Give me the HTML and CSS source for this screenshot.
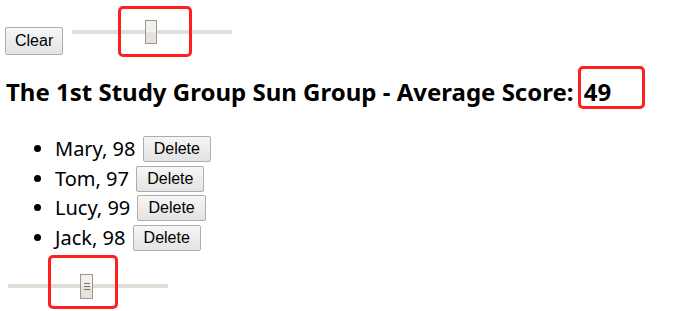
FILE: index.html
```html
<!DOCTYPE html>
<html lang="en">
  <head>
    <meta charset="UTF-8" />
    <title>Study Group</title>
    <link rel="stylesheet" href="styles.css">
  </head>
  <body>
    <!-- Top controls -->
    <div class="toolbar">
      <button class="btn clear-btn">Clear</button>
      <div class="slider">
        <div class="thumb" style="margin-left: 73px"></div>
      </div>
    </div>

    <h2 class="title">The 1st Study Group Sun Group - Average Score: <span class="score">49</span></h2>

    <ul class="members">
      <li>Mary, 98 <button class="btn">Delete</button></li>
      <li>Tom, 97 <button class="btn">Delete</button></li>
      <li>Lucy, 99 <button class="btn">Delete</button></li>
      <li>Jack, 98 <button class="btn">Delete</button></li>
    </ul>

    <div class="slider slider-bottom">
      <div class="thumb grip" style="margin-left: 72px"><i></i><i></i><i></i></div>
    </div>

    <!-- Highlight marks -->
    <div class="mark mark-top"></div>
    <div class="mark mark-score"></div>
    <div class="mark mark-bottom"></div>
  </body>
</html>
```

FILE: styles.css
```css
* {
  box-sizing: border-box;
}
body {
  margin: 0;
  padding: 0 5px;
  background: #fff;
  color: #000;
  font-family: "Noto Sans", sans-serif;
  position: relative;
  height: 311px;
  overflow: hidden;
}

/* Buttons */
.btn {
  font-family: "Liberation Sans", Arial, sans-serif;
  font-size: 16px;
  line-height: 18px;
  padding: 3px 10px;
  border: 1px solid #adadad;
  border-radius: 2px;
  background: linear-gradient(#f6f6f6, #e3e3e3);
  color: #000;
}

/* Top bar */
.toolbar {
  display: flex;
  align-items: flex-start;
  padding-top: 20px;
}
.clear-btn {
  margin-top: 7px;
  padding: 4px 9px;
}

/* Slider */
.slider {
  width: 160px;
  height: 24px;
  margin-left: 9px;
  background: linear-gradient(#e2ded8, #e2ded8) 0 10px / 100% 4px no-repeat;
}
.thumb {
  width: 12px;
  height: 24px;
  border: 1px solid #9b968f;
  background: linear-gradient(#f2f1ee 50%, #e6e2dc 50%);
}
.slider-bottom {
  margin: 20px 0 0 3px;
  height: 25px;
}
.slider-bottom .thumb {
  width: 13px;
  height: 25px;
  display: flex;
  flex-direction: column;
  justify-content: center;
  align-items: center;
  gap: 2px;
}
.grip i {
  display: block;
  width: 6px;
  height: 1px;
  background: #77736c;
}

/* Heading */
.title {
  margin: 21px 0 0 1px;
  font-size: 24px;
  line-height: 32px;
  font-weight: bold;
}
.score {
  margin-left: 4px;
}

/* List */
.members {
  margin: 28px 0 0;
  padding-left: 50px;
  font-size: 20px;
}
.members li {
  height: 29.5px;
  line-height: 26px;
}
.members .btn {
  margin-left: 2px;
  vertical-align: top;
}

/* Red highlight marks */
.mark {
  position: absolute;
  border: 3px solid #ff1f1f;
  border-radius: 5px;
}
.mark-top {
  left: 118px;
  top: 6px;
  width: 74px;
  height: 51px;
}
.mark-score {
  left: 578px;
  top: 66px;
  width: 67px;
  height: 43px;
}
.mark-bottom {
  left: 48px;
  top: 255px;
  width: 70px;
  height: 54px;
}
```
